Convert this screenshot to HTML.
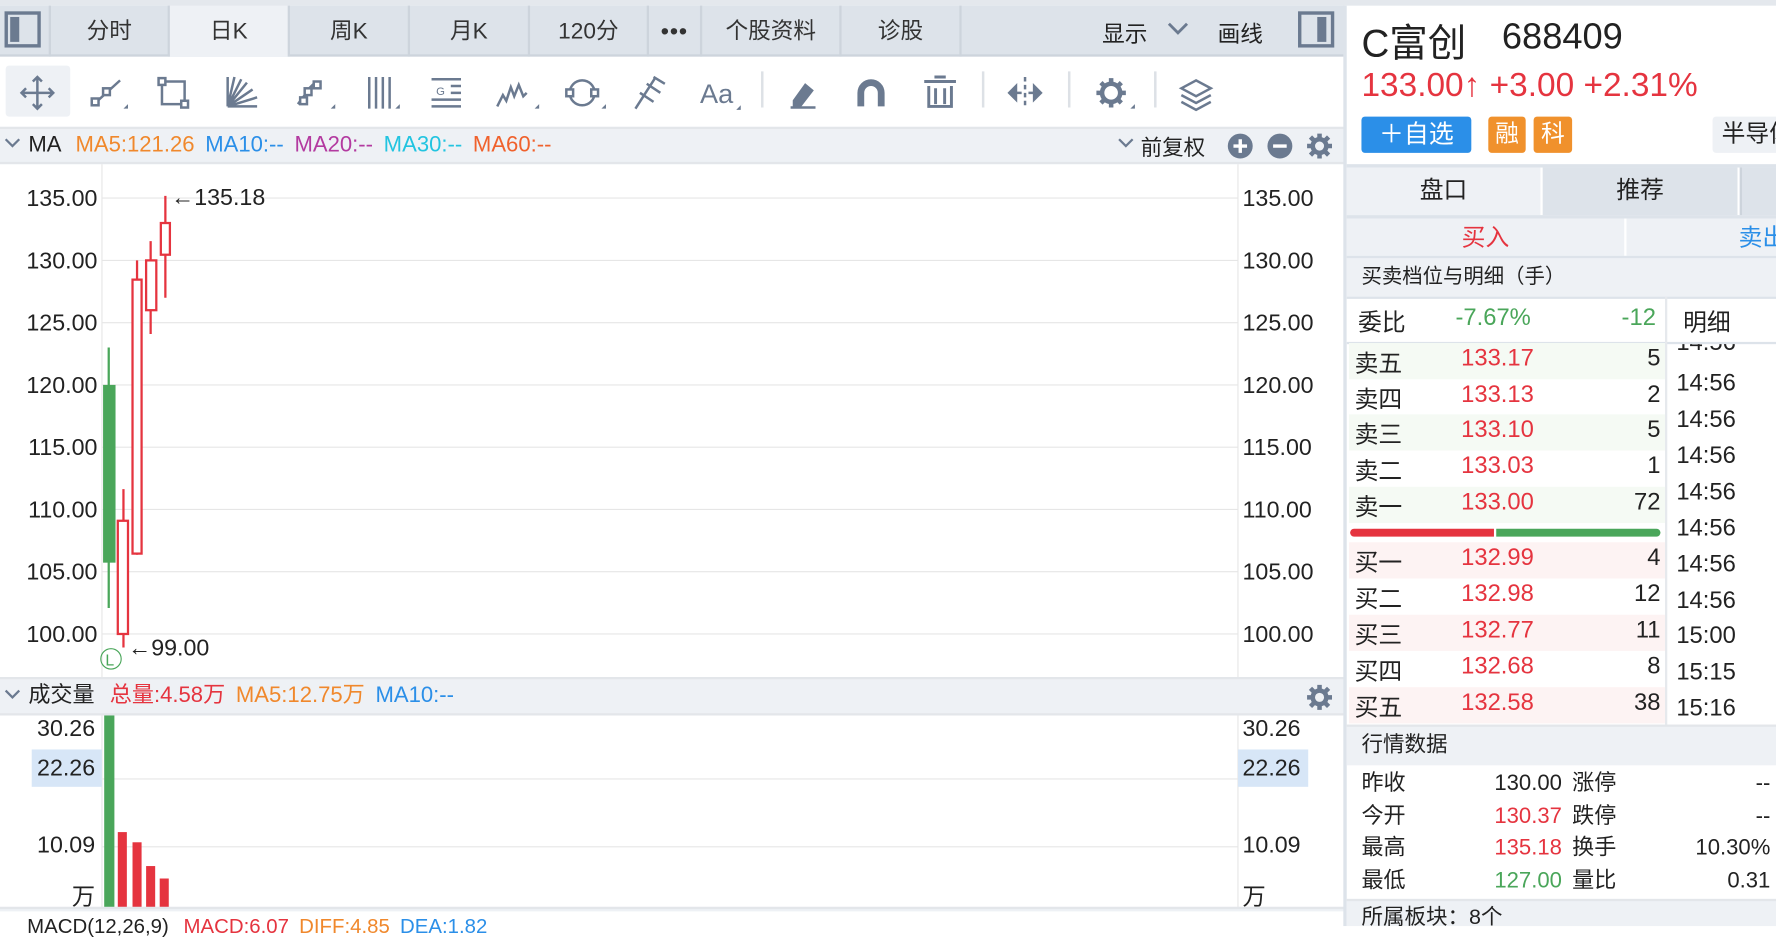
<!DOCTYPE html>
<html><head><meta charset="utf-8"><style>
*{margin:0;padding:0;box-sizing:border-box}
body{width:1776px;height:926px;overflow:hidden;background:#fff;font-family:"Liberation Sans","Noto Sans CJK SC",sans-serif;color:#222}
#w{position:absolute;left:0;top:0;width:1568px;height:818px;transform:scale(1.13265,1.1321);transform-origin:0 0;background:#fff}
.a{position:absolute;white-space:nowrap}
.tab{position:absolute;top:5px;height:45px;line-height:47px;text-align:center;font-size:20px;color:#333;border-right:2px solid #cdd4dc}
.row{position:absolute;left:1191px;width:279px;height:31.8px;font-size:21px}
.row span{position:absolute;top:2px}
.t{position:absolute;left:1480px;font-size:21px;color:#222}
</style></head><body><div id="w">
<div class="a" style="left:0;top:0;width:1568px;height:5px;background:#e4e8ed"></div>
<div class="a" style="left:0;top:5px;width:1187px;height:45px;background:#dde3ea;border-bottom:2px solid #cdd4dc"></div>
<div class="a" style="left:4px;top:10px;width:32px;height:32px;border:3px solid #6b7a90"></div>
<div class="a" style="left:9px;top:15px;width:8px;height:22px;background:#6b7a90"></div>
<div class="a" style="left:43px;top:5px;width:2px;height:45px;background:#cdd4dc"></div>
<div class="tab" style="left:45px;width:105px">分时</div>
<div class="tab" style="left:150px;width:106px;background:#eef1f5">日K</div>
<div class="tab" style="left:256px;width:106px">周K</div>
<div class="tab" style="left:362px;width:106px">月K</div>
<div class="tab" style="left:468px;width:105px">120分</div>
<div class="tab" style="left:573px;width:47px;font-weight:bold;letter-spacing:1px">•••</div>
<div class="tab" style="left:620px;width:123px">个股资料</div>
<div class="tab" style="left:743px;width:106px">诊股</div>
<div class="a" style="left:973px;top:14px;font-size:20px">显示</div>
<svg class="a" style="left:1030px;top:18px" width="20" height="14"><path d="M2 3l8 8 8-8" stroke="#6b7a90" stroke-width="2.5" fill="none"/></svg>
<div class="a" style="left:1075px;top:14px;font-size:20px">画线</div>
<div class="a" style="left:1146px;top:10px;width:32px;height:32px;border:3px solid #6b7a90"></div>
<div class="a" style="left:1163px;top:15px;width:8px;height:22px;background:#6b7a90"></div>
<div class="a" style="left:5px;top:58px;width:57px;height:45px;background:#eef1f5;border-radius:3px"></div>
<svg class="a" style="left:0;top:55px" width="1187" height="55" fill="none" stroke="#6b7a90" stroke-width="2.2">
<g transform="translate(33,27)"><path d="M-14 0h28M0-14v28M-4-10l4-4 4 4M-4 10l4 4 4-4M-10-4l-4 4 4 4M10-4l4 4-4 4"/></g>
<g transform="translate(95,27)"><path d="M-11 9L11-11"/><rect x="-14" y="5" width="6" height="6" fill="#fff"/><rect x="-4" y="-4" width="6" height="6" fill="#fff"/><path d="M14 14h4v-4z" fill="#6b7a90" stroke="none"/></g>
<g transform="translate(153,27)"><rect x="-10" y="-10" width="20" height="20"/><rect x="-13" y="-13" width="6" height="6" fill="#fff"/><rect x="7" y="7" width="6" height="6" fill="#fff"/></g>
<g transform="translate(213,27)"><path d="M-12 12V-14M-12 12L-6-14M-12 12L0-12M-12 12L5-9M-12 12L10-3M-12 12L14 4M-12 12H14"/></g>
<g transform="translate(275,27)"><path d="M-12 10l6-8M-4-2l8-8"/><rect x="-10" y="4" width="6" height="6" fill="#fff"/><rect x="-6" y="-4" width="6" height="6" fill="#fff"/><rect x="2" y="-10" width="6" height="6" fill="#fff"/><path d="M17 14h4v-4z" fill="#6b7a90" stroke="none"/></g>
<g transform="translate(335,27)"><path d="M-9-14v28M-3-14v28M3-14v28M9-14v28"/><path d="M14 14h4v-4z" fill="#6b7a90" stroke="none"/></g>
<g transform="translate(394,27)"><path d="M-13-12h26M4-6h9M4 0h9M-13 6h26M-13 12h26"/><text x="-9" y="2" font-size="10" fill="#6b7a90" stroke="none" font-family="Liberation Sans">G</text></g>
<g transform="translate(455,27)"><path d="M-16 12l5-10 3 5 4-12 3 8 4-10 4 10 3-3"/><path d="M17 14h4v-4z" fill="#6b7a90" stroke="none"/></g>
<g transform="translate(514,27)"><circle r="11"/><rect x="-14" y="-3" width="6" height="6" fill="#fff"/><rect x="8" y="-3" width="6" height="6" fill="#fff"/><path d="M17 14h4v-4z" fill="#6b7a90" stroke="none"/></g>
<g transform="translate(573,27)"><path d="M-12 14L6-14M-8 0l12 8M-2-8l12 8M4-14l10 6"/></g>
<text x="618" y="36" font-size="24" fill="#6b7a90" stroke="none" font-family="Liberation Sans">Aa</text><path d="M650 42h4v-4z" fill="#6b7a90" stroke="none"/>
<path d="M673 8v32" stroke="#dde1e6"/>
<g transform="translate(709,27)"><path d="M-11 13h22"/><path d="M-8 7l10-14 6 5-10 13h-6z" fill="#6b7a90"/></g>
<g transform="translate(769,27)"><path d="M-9 12V0a9 9 0 0 1 18 0v12" stroke-width="6"/></g>
<g transform="translate(830,27)"><path d="M-14-10h28M-5-14h10M-10-6v18h20v-18M-4-4v14M4-4v14" stroke-width="2.6"/></g>
<path d="M868 8v32M944 8v32M1020 8v32" stroke="#dde1e6"/>
<g transform="translate(905,27)"><path d="M0-14v28" stroke-dasharray="4 3"/><path d="M-14 0l6-6v12zM14 0l-6-6v12z" fill="#6b7a90"/><path d="M-8 0h5M3 0h5"/></g>
<g transform="translate(981,27)"><circle r="8" stroke-width="4"/><path d="M0-13v5M0 8v5M-13 0h5M8 0h5M-9-9l4 4M5 5l4 4M-9 9l4-4M5-5l4-4" stroke-width="4"/><path d="M17 14h4v-4z" fill="#6b7a90" stroke="none"/></g>
<g transform="translate(1056,27)"><path d="M-13-4L0-11 13-4 0 3z"/><path d="M-13 2L0 9 13 2M-13 8L0 15 13 8"/></g>
</svg>
<div class="a" style="left:0;top:112px;width:1187px;height:33px;background:#eef1f5;border-top:2px solid #e3e6ea;border-bottom:2px solid #e3e6ea"></div>
<svg class="a" style="left:4px;top:122px" width="14" height="10"><path d="M1 1l6 6 6-6" stroke="#6b7a90" stroke-width="2" fill="none"/></svg>
<div class="a" style="left:25px;top:116px;font-size:19.5px;line-height:24px"><span style="color:#222">MA</span> <span style="color:#f0882c;margin-left:8px">MA5:121.26</span> <span style="color:#2b8fe8;margin-left:4px">MA10:--</span> <span style="color:#b33aa0;margin-left:4px">MA20:--</span> <span style="color:#22c4e0;margin-left:4px">MA30:--</span> <span style="color:#f0612c;margin-left:4px">MA60:--</span></div>
<svg class="a" style="left:987px;top:122px" width="14" height="10"><path d="M1 1l6 6 6-6" stroke="#6b7a90" stroke-width="2" fill="none"/></svg>
<div class="a" style="left:1007px;top:116px;font-size:19px">前复权</div>
<svg class="a" style="left:1083px;top:117px" width="100" height="24">
<circle cx="12" cy="12" r="11" fill="#6b7a90"/><path d="M6 12h12M12 6v12" stroke="#fff" stroke-width="3"/>
<circle cx="47" cy="12" r="11" fill="#6b7a90"/><path d="M41 12h12" stroke="#fff" stroke-width="3"/>
<g transform="translate(82,12)" stroke="#6b7a90"><circle r="6" stroke-width="4" fill="none"/><path d="M0-11v5M0 6v5M-11 0h5M6 0h5M-8-8l4 4M4 4l4 4M-8 8l4-4M4-4l4-4" stroke-width="4"/></g>
</svg>
<svg class="a" style="left:0;top:145px" width="1187" height="660" font-family="Liberation Sans" font-size="20.5" fill="#222">
<g stroke="#e6e6e6" stroke-width="1">
<path d="M90 30H1093M90 85H1093M90 140H1093M90 195H1093M90 250H1093M90 305H1093M90 360H1093M90 415H1093"/>
</g>
<path d="M90 0V453M1093 0V453" stroke="#e6e6e6"/>
<g text-anchor="end"><text x="86" y="37">135.00</text><text x="86" y="92">130.00</text><text x="86" y="147">125.00</text><text x="86" y="202">120.00</text><text x="86" y="257">115.00</text><text x="86" y="312">110.00</text><text x="86" y="367">105.00</text><text x="86" y="422">100.00</text></g>
<g><text x="1097" y="37">135.00</text><text x="1097" y="92">130.00</text><text x="1097" y="147">125.00</text><text x="1097" y="202">120.00</text><text x="1097" y="257">115.00</text><text x="1097" y="312">110.00</text><text x="1097" y="367">105.00</text><text x="1097" y="422">100.00</text></g>
<path d="M96 162V392" stroke="#4aa65a" stroke-width="2"/><rect x="91" y="195" width="11" height="157" fill="#4aa65a"/>
<g stroke="#e5343f" stroke-width="2" fill="#fff">
<path d="M109 287v140"/><rect x="104" y="315" width="9" height="100"/>
<path d="M121 85v260"/><rect x="117" y="102" width="8" height="242"/>
<path d="M133 68v82"/><rect x="129" y="85" width="9" height="44"/>
<path d="M146 28v90"/><rect x="142" y="52" width="8" height="28"/>
</g>
<text x="151" y="36">←135.18</text>
<text x="113" y="434">←99.00</text>
<circle cx="98" cy="437" r="9" fill="none" stroke="#4aa65a" stroke-width="1"/><text x="93" y="443" font-size="14" fill="#4aa65a">L</text>
<rect x="0" y="453" width="1187" height="34" fill="#eef1f5"/>
<path d="M0 454H1187M0 486H1187" stroke="#e3e6ea" stroke-width="2"/>
<path d="M90 487V657M1093 487V657" stroke="#e6e6e6"/>
<path d="M90 543H1093M90 603H1093" stroke="#e6e6e6"/>
<rect x="28" y="517" width="62" height="33" fill="#d7e6f7"/><rect x="1093" y="517" width="62" height="33" fill="#d7e6f7"/>
<g text-anchor="end"><text x="84" y="505">30.26</text><text x="84" y="540">22.26</text><text x="84" y="608">10.09</text><text x="84" y="654">万</text></g>
<g><text x="1097" y="505">30.26</text><text x="1097" y="540">22.26</text><text x="1097" y="608">10.09</text><text x="1097" y="654">万</text></g>
<rect x="92" y="487" width="9" height="170" fill="#4aa65a"/>
<g fill="#e5343f"><rect x="104" y="590" width="8" height="67"/><rect x="117" y="599" width="8" height="58"/><rect x="129" y="620" width="8" height="37"/><rect x="141" y="631" width="8" height="26"/></g>
<rect x="0" y="657" width="1187" height="10" fill="#eef1f5"/>
<path d="M0 657H1187" stroke="#e3e6ea" stroke-width="2"/>
</svg>
<svg class="a" style="left:4px;top:609px" width="14" height="10"><path d="M1 1l6 6 6-6" stroke="#6b7a90" stroke-width="2" fill="none"/></svg>
<div class="a" style="left:25px;top:602px;font-size:19.5px;line-height:24px"><span>成交量</span> <span style="color:#e5343f;margin-left:8px">总量:4.58万</span> <span style="color:#f0882c;margin-left:4px">MA5:12.75万</span> <span style="color:#2b8fe8;margin-left:4px">MA10:--</span></div>
<svg class="a" style="left:1153px;top:604px" width="24" height="24"><g transform="translate(12,12)" stroke="#6b7a90"><circle r="6" stroke-width="4" fill="none"/><path d="M0-11v5M0 6v5M-11 0h5M6 0h5M-8-8l4 4M4 4l4 4M-8 8l4-4M4-4l4-4" stroke-width="4"/></g></svg>
<div class="a" style="left:24px;top:807px;font-size:18px;line-height:22px"><span>MACD(12,26,9)</span> <span style="color:#e5343f;margin-left:8px">MACD:6.07</span> <span style="color:#f0882c;margin-left:4px">DIFF:4.85</span> <span style="color:#2b8fe8;margin-left:4px">DEA:1.82</span></div>
<div class="a" style="left:1186px;top:5px;width:3px;height:813px;background:#dde3ea"></div>
<div class="a" style="left:1202px;top:11px;font-size:34px;color:#222">C富创</div>
<div class="a" style="left:1326px;top:14px;font-size:32px;color:#222">688409</div>
<div class="a" style="left:1202px;top:59px;font-size:29.5px;color:#e5343f">133.00↑ +3.00 +2.31%</div>
<div class="a" style="left:1202px;top:103px;width:97px;height:32px;background:#2b8fe8;border-radius:3px;color:#fff;font-size:22px;line-height:32px;text-align:center">＋自选</div>
<div class="a" style="left:1314px;top:103px;width:33px;height:32px;background:#f0912c;border-radius:3px;color:#fff;font-size:21px;line-height:32px;text-align:center">融</div>
<div class="a" style="left:1354px;top:103px;width:34px;height:32px;background:#f0912c;border-radius:3px;color:#fff;font-size:21px;line-height:32px;text-align:center">科</div>
<div class="a" style="left:1512px;top:103px;width:60px;height:32px;background:#eef1f5;border-radius:3px;font-size:21px;line-height:32px;padding-left:8px;overflow:hidden">半导体</div>
<div class="a" style="left:1189px;top:145px;width:379px;height:3px;background:#dde3ea"></div>
<div class="a" style="left:1189px;top:148px;width:171px;height:42px;background:#eef1f5;font-size:21px;line-height:42px;text-align:center">盘口</div>
<div class="a" style="left:1362px;top:148px;width:172px;height:42px;background:#dde3ea;font-size:21px;line-height:42px;text-align:center">推荐</div>
<div class="a" style="left:1536px;top:148px;width:32px;height:42px;background:#dde3ea;border-left:2px solid #cdd4dc"></div>
<div class="a" style="left:1189px;top:190px;width:379px;height:3px;background:#dde3ea"></div>
<div class="a" style="left:1189px;top:193px;width:245px;height:33px;background:#eef1f5;font-size:21px;line-height:35px;text-align:center;color:#e5343f">买入</div>
<div class="a" style="left:1436px;top:193px;width:132px;height:33px;background:#eef1f5;font-size:21px;line-height:35px;color:#2b8fe8;padding-left:99px;overflow:hidden">卖出</div>
<div class="a" style="left:1189px;top:226px;width:379px;height:36px;background:#eef1f5;border-top:2px solid #dde3ea;font-size:18px;line-height:33px;padding-left:13px">买卖档位与明细（手）</div>
<div class="a" style="left:1189px;top:262px;width:379px;height:42px;background:#fff;border-top:2px solid #dde3ea;border-bottom:2px solid #dde3ea"></div>
<div class="a" style="left:1199px;top:269px;font-size:21px">委比</div>
<div class="a" style="left:1285px;top:269px;font-size:21px;color:#4aa65a">-7.67%</div>
<div class="a" style="left:1400px;top:269px;width:62px;text-align:right;font-size:21px;color:#4aa65a">-12</div>
<div class="a" style="left:1470px;top:262px;width:2px;height:378px;background:#e6e9ed"></div>
<div class="a" style="left:1486px;top:269px;font-size:21px">明细</div>
<div class="row" style="top:303px;background:#f5faf4"><span style="left:5px">卖五</span><span style="left:99px;color:#e5343f">133.17</span><span style="right:4px">5</span></div>
<div class="row" style="top:335px"><span style="left:5px">卖四</span><span style="left:99px;color:#e5343f">133.13</span><span style="right:4px">2</span></div>
<div class="row" style="top:366px;background:#f5faf4"><span style="left:5px">卖三</span><span style="left:99px;color:#e5343f">133.10</span><span style="right:4px">5</span></div>
<div class="row" style="top:398px"><span style="left:5px">卖二</span><span style="left:99px;color:#e5343f">133.03</span><span style="right:4px">1</span></div>
<div class="row" style="top:430px;background:#f5faf4"><span style="left:5px">卖一</span><span style="left:99px;color:#e5343f">133.00</span><span style="right:4px">72</span></div>
<div class="a" style="left:1192px;top:467px;width:127px;height:7px;background:#e5343f;border-radius:4px 0 0 4px"></div>
<div class="a" style="left:1321px;top:467px;width:145px;height:7px;background:#4aa65a;border-radius:0 4px 4px 0"></div>
<div class="row" style="top:479px;background:#fdf3f3"><span style="left:5px">买一</span><span style="left:99px;color:#e5343f">132.99</span><span style="right:4px">4</span></div>
<div class="row" style="top:511px"><span style="left:5px">买二</span><span style="left:99px;color:#e5343f">132.98</span><span style="right:4px">12</span></div>
<div class="row" style="top:543px;background:#fdf3f3"><span style="left:5px">买三</span><span style="left:99px;color:#e5343f">132.77</span><span style="right:4px">11</span></div>
<div class="row" style="top:575px"><span style="left:5px">买四</span><span style="left:99px;color:#e5343f">132.68</span><span style="right:4px">8</span></div>
<div class="row" style="top:607px;background:#fdf3f3"><span style="left:5px">买五</span><span style="left:99px;color:#e5343f">132.58</span><span style="right:4px">38</span></div>
<div class="a" style="left:1472px;top:304px;width:96px;height:336px;overflow:hidden">
<div class="t" style="left:8px;top:-13px">14:56</div><div class="t" style="left:8px;top:23px">14:56</div><div class="t" style="left:8px;top:55px">14:56</div><div class="t" style="left:8px;top:87px">14:56</div><div class="t" style="left:8px;top:119px">14:56</div><div class="t" style="left:8px;top:151px">14:56</div><div class="t" style="left:8px;top:183px">14:56</div><div class="t" style="left:8px;top:215px">14:56</div><div class="t" style="left:8px;top:246px">15:00</div><div class="t" style="left:8px;top:278px">15:15</div><div class="t" style="left:8px;top:310px">15:16</div>
</div>
<div class="a" style="left:1189px;top:640px;width:379px;height:36px;background:#eef1f5;border-top:2px solid #e3e6ea;font-size:19px;line-height:34px;padding-left:13px">行情数据</div>
<div class="a" style="left:1189px;top:676px;width:379px;height:118px;font-size:19.5px;line-height:28.5px">
<div class="a" style="left:13px;top:2px">昨收<br>今开<br>最高<br>最低</div>
<div class="a" style="left:100px;top:2px;width:90px;text-align:right"><span>130.00</span><br><span style="color:#e5343f">130.37</span><br><span style="color:#e5343f">135.18</span><br><span style="color:#4aa65a">127.00</span></div>
<div class="a" style="left:199px;top:2px">涨停<br>跌停<br>换手<br>量比</div>
<div class="a" style="left:270px;top:2px;width:104px;text-align:right">--<br>--<br>10.30%<br>0.31</div>
</div>
<div class="a" style="left:1189px;top:794px;width:379px;height:24px;background:#eef1f5;border-top:2px solid #e3e6ea;font-size:19px;line-height:30px;padding-left:13px;overflow:hidden">所属板块：8个</div>
</div></body></html>
